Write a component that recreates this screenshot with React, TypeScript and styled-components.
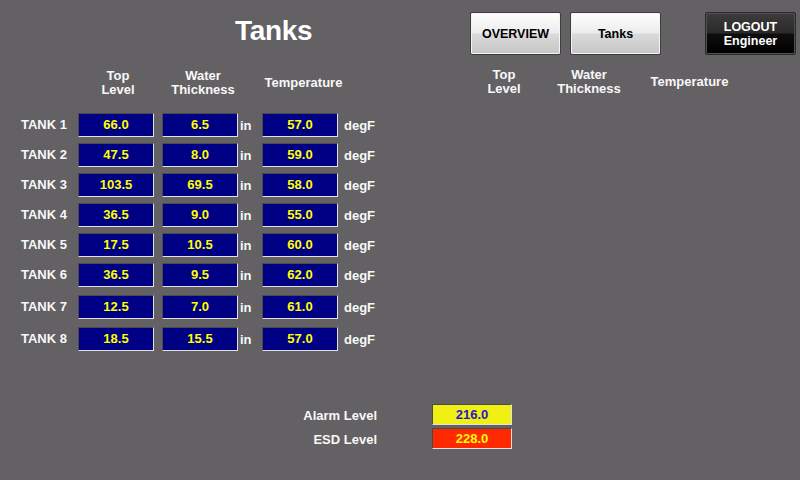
import React from "react";
import styled, { createGlobalStyle } from "styled-components";

const GlobalStyle = createGlobalStyle`
  html, body {
    margin: 0;
    padding: 0;
    background: #636163;
  }
  body {
    font-family: "Liberation Sans", Arial, sans-serif;
  }
`;

const Screen = styled.div`
  width: 800px;
  height: 480px;
  background: #636163;
  color: #f8f8f8;
  display: flex;
  flex-direction: column;
  overflow: hidden;
  box-sizing: border-box;
`;

const TopBar = styled.div`
  height: 69px;
  box-sizing: border-box;
  padding-top: 12px;
  display: flex;
  align-items: flex-start;
`;

const TitleArea = styled.div`
  width: 470px;
  box-sizing: border-box;
  padding-left: 235px;
  padding-top: 5px;
`;

const Title = styled.h1`
  margin: 0;
  font-size: 28px;
  line-height: 28px;
  font-weight: bold;
  color: #ffffff;
  letter-spacing: -0.3px;
`;

const NavButton = styled.button<{ $dark?: boolean; $space?: number }>`
  width: 91px;
  height: 43px;
  margin: 0 0 0 ${(p) => p.$space ?? 0}px;
  padding: 0;
  box-sizing: border-box;
  border-radius: 2px;
  font-family: "Liberation Sans", Arial, sans-serif;
  font-size: 12.5px;
  font-weight: bold;
  line-height: 14px;
  display: flex;
  flex-direction: column;
  align-items: center;
  justify-content: center;
  border: 1px solid ${(p) => (p.$dark ? "#2a2a2a" : "#3e3e3e")};
  color: ${(p) => (p.$dark ? "#ffffff" : "#000000")};
  background: ${(p) =>
    p.$dark
      ? "linear-gradient(to bottom, #3c3c3c 0%, #2a2a2a 48%, #0e0e0e 52%, #000000 100%)"
      : "linear-gradient(to bottom, #ffffff 0%, #ececec 48%, #dadada 52%, #c6c6c6 100%)"};
  box-shadow: ${(p) =>
    p.$dark ? "inset 0 0 0 1px #505050" : "inset 0 0 0 1px #f4f4f4"};
`;

const HeaderRow = styled.div`
  display: flex;
  padding-left: 78px;
  gap: 105px;
`;

const HeaderGroup = styled.div<{ $raise?: number }>`
  display: grid;
  grid-template-columns: 80px 90px 111px;
  margin-top: ${(p) => -(p.$raise ?? 0)}px;
`;

const HeaderCell = styled.div`
  height: 28px;
  display: flex;
  align-items: center;
  justify-content: center;
  text-align: center;
  font-size: 13px;
  font-weight: bold;
  line-height: 14px;
  color: #f8f8f8;
`;

const Table = styled.div`
  margin-top: 15px;
  display: flex;
  flex-direction: column;
`;

const Row = styled.div<{ $space: number }>`
  margin-top: ${(p) => p.$space}px;
  height: 24px;
  padding-left: 21px;
  display: grid;
  grid-template-columns: 57px 84px 76px 24px 76px auto;
  align-items: center;
`;

const TankLabel = styled.div`
  font-size: 13px;
  font-weight: bold;
  line-height: 24px;
  padding-top: 1px;
  color: #f8f8f8;
  white-space: nowrap;
`;

const ValueBox = styled.div`
  width: 76px;
  height: 24px;
  box-sizing: border-box;
  background: #000084;
  border: 1px solid;
  border-color: #4a4a4a #e2e2e2 #e2e2e2 #4a4a4a;
  color: #ffff00;
  font-size: 13px;
  font-weight: bold;
  display: flex;
  align-items: center;
  justify-content: center;
`;

const Unit = styled.div<{ $pad: number }>`
  padding-left: ${(p) => p.$pad}px;
  font-size: 13px;
  font-weight: bold;
  color: #f8f8f8;
  padding-top: 1px;
`;

const Levels = styled.div`
  margin-top: 54px;
  display: grid;
  grid-template-columns: 377px 80px;
  column-gap: 55px;
  row-gap: 3px;
  align-items: center;
`;

const LevelLabel = styled.div`
  text-align: right;
  font-size: 13px;
  font-weight: bold;
  color: #f8f8f8;
  padding-top: 1px;
`;

const LevelBox = styled.div<{ $bg: string; $fg: string }>`
  height: 21px;
  box-sizing: border-box;
  background: ${(p) => p.$bg};
  color: ${(p) => p.$fg};
  border: 1px solid;
  border-color: #4a4a4a #e2e2e2 #e2e2e2 #4a4a4a;
  font-size: 13px;
  font-weight: bold;
  display: flex;
  align-items: center;
  justify-content: center;
`;

const tanks = [
  { name: "TANK 1", top: "66.0", water: "6.5", temp: "57.0", space: 0 },
  { name: "TANK 2", top: "47.5", water: "8.0", temp: "59.0", space: 6 },
  { name: "TANK 3", top: "103.5", water: "69.5", temp: "58.0", space: 6 },
  { name: "TANK 4", top: "36.5", water: "9.0", temp: "55.0", space: 6 },
  { name: "TANK 5", top: "17.5", water: "10.5", temp: "60.0", space: 6 },
  { name: "TANK 6", top: "36.5", water: "9.5", temp: "62.0", space: 6 },
  { name: "TANK 7", top: "12.5", water: "7.0", temp: "61.0", space: 8 },
  { name: "TANK 8", top: "18.5", water: "15.5", temp: "57.0", space: 8 },
];

const Headers: React.FC<{ raise?: number }> = ({ raise }) => (
  <HeaderGroup $raise={raise}>
    <HeaderCell>
      Top
      <br />
      Level
    </HeaderCell>
    <HeaderCell>
      Water
      <br />
      Thickness
    </HeaderCell>
    <HeaderCell>Temperature</HeaderCell>
  </HeaderGroup>
);

export default function App() {
  return (
    <>
      <GlobalStyle />
      <Screen>
        <TopBar>
          <TitleArea>
            <Title>Tanks</Title>
          </TitleArea>
          <NavButton>OVERVIEW</NavButton>
          <NavButton $space={9}>Tanks</NavButton>
          <NavButton $dark $space={44}>
            <span>LOGOUT</span>
            <span>Engineer</span>
          </NavButton>
        </TopBar>
        <HeaderRow>
          <Headers />
          <Headers raise={1} />
        </HeaderRow>
        <Table>
          {tanks.map((t) => (
            <Row key={t.name} $space={t.space}>
              <TankLabel>{t.name}</TankLabel>
              <ValueBox>{t.top}</ValueBox>
              <ValueBox>{t.water}</ValueBox>
              <Unit $pad={2}>in</Unit>
              <ValueBox>{t.temp}</ValueBox>
              <Unit $pad={6}>degF</Unit>
            </Row>
          ))}
        </Table>
        <Levels>
          <LevelLabel>Alarm Level</LevelLabel>
          <LevelBox $bg="#f0f012" $fg="#2a14d0">216.0</LevelBox>
          <LevelLabel>ESD Level</LevelLabel>
          <LevelBox $bg="#ff2800" $fg="#ffff00">228.0</LevelBox>
        </Levels>
      </Screen>
    </>
  );
}
